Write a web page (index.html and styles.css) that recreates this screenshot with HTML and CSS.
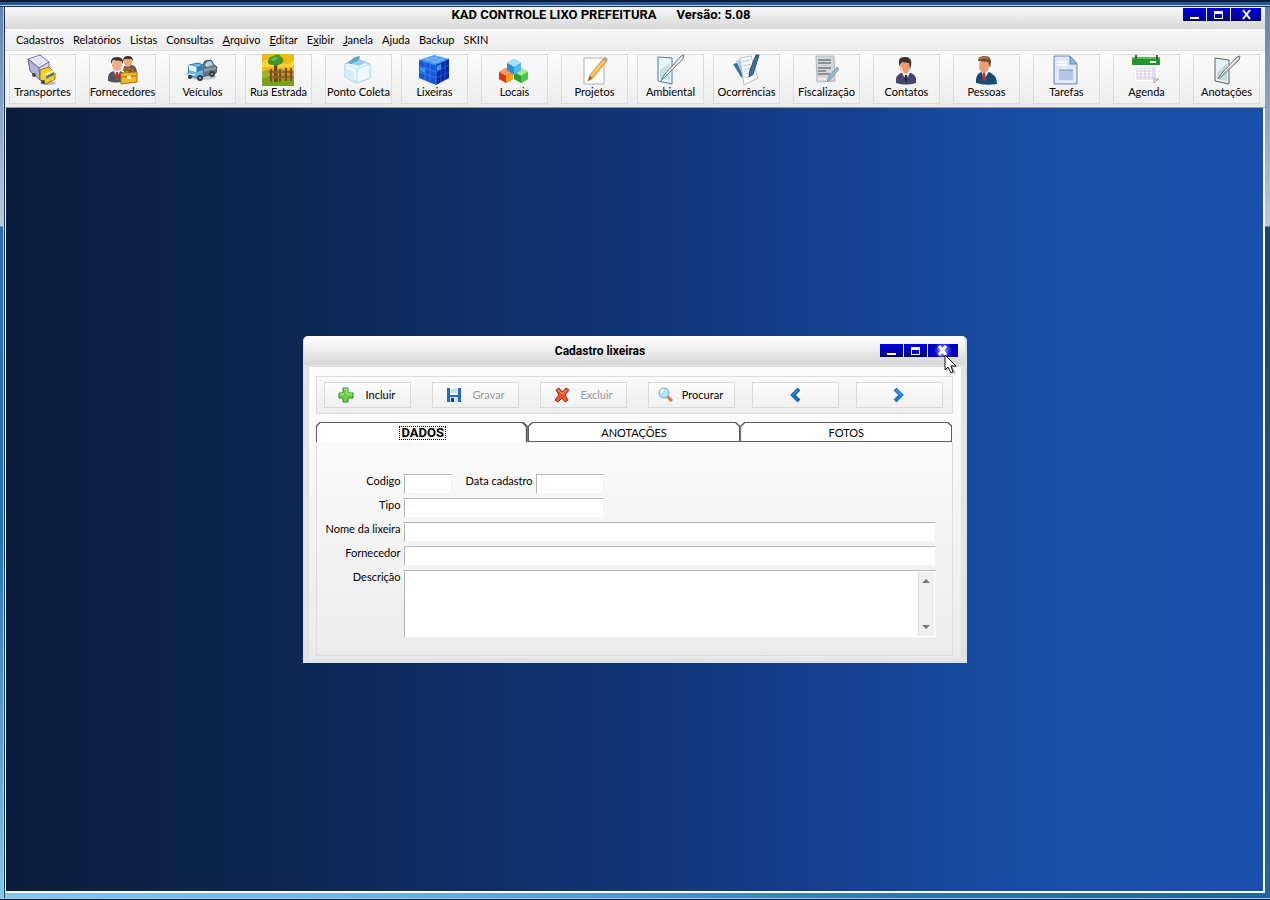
FILE: index.html
```html
<!DOCTYPE html>
<html lang="pt-BR">
    <head>
        <meta charset="utf-8">
        <title>KAD Controle Lixo Prefeitura</title>
        <link rel="stylesheet" href="styles.css">
    </head>
    <body>
        <div class="window">
            <header class="titlebar">
                <h1><span>KAD CONTROLE LIXO PREFEITURA</span><span>Versão: 5.08</span></h1>
                <div class="controls">
                    <button type="button" aria-label="Minimizar"><svg width="13" height="11"><path d="M2 8h9v2H2z" fill="#fff"/></svg></button>
                    <button type="button" aria-label="Maximizar"><svg width="13" height="11"><path d="M2 2h9v8H2zM3 5v4h7V5z" fill="#fff" fill-rule="evenodd"/></svg></button>
                    <button type="button" class="close" aria-label="Fechar"><svg width="13" height="11"><path d="M3 1l7 9M10 1l-7 9" stroke="#fff" stroke-width="2"/></svg></button>
                </div>
            </header>

            <nav class="menu">
                <a href="#">Cadastros</a>
                <a href="#">Relatórios</a>
                <a href="#">Listas</a>
                <a href="#">Consultas</a>
                <a href="#"><u>A</u>rquivo</a>
                <a href="#"><u>E</u>ditar</a>
                <a href="#">E<u>x</u>ibir</a>
                <a href="#"><u>J</u>anela</a>
                <a href="#">Ajuda</a>
                <a href="#">Backup</a>
                <a href="#">SKIN</a>
            </nav>

            <div class="toolbar">
                <button type="button" class="tool">
                    <svg width="32" height="32" viewBox="0 0 32 32">
                        <ellipse cx="22" cy="29" rx="8" ry="2" fill="#bbb"/>
                        <path d="M2 5l12-4 9 7-10 6z" fill="#e6e6f8" stroke="#77779c"/>
                        <path d="M2 5l11 9 1 12L4 17z" fill="#b4b4d4" stroke="#66668a"/>
                        <path d="M13 14l10-6v9l-9 9z" fill="#d2d2ea" stroke="#77779c"/>
                        <path d="M14 16l9-3 6 6v6l-9 5-6-4z" fill="#f6cf2c" stroke="#94700b"/>
                        <path d="M19 20l8-4 2 3-8 5z" fill="#fff3a0"/>
                        <path d="M20 22l8-4v3l-8 4z" fill="#557085"/>
                        <circle cx="17" cy="28" r="2" fill="#444"/><circle cx="8" cy="21" r="2" fill="#444"/>
                    </svg>
                    <span>Transportes</span>
                </button>
                <button type="button" class="tool">
                    <svg width="32" height="32" viewBox="0 0 32 32">
                        <path d="M17 17q0-6 5-6h4q5 1 5 8z" fill="#5a5c66"/>
                        <ellipse cx="22" cy="8" rx="4" ry="5" fill="#eda878"/>
                        <path d="M17 7q0-5 5-5 5 0 5 5l-2-2h-6z" fill="#42302b"/>
                        <path d="M2 27q-1-9 6-10h6q5 1 4 10-8 3-16 0z" fill="#52545e"/>
                        <path d="M8 17l3 9 3-9z" fill="#fff"/><path d="M10 18h2l1 4-2 4-2-4z" fill="#bc3322"/>
                        <ellipse cx="11" cy="11" rx="5" ry="6" fill="#f2ae84"/>
                        <path d="M5 10q-1-7 6-7 7 0 6 7l-2-3-8-1z" fill="#38302d"/>
                        <path d="M19 18v-3h8v3" fill="none" stroke="#a86b0b" stroke-width="2"/>
                        <path d="M15 19l16-1v10l-16 2z" fill="#edb82b" stroke="#a8700b"/>
                        <path d="M16 23l14-1" stroke="#9e6900"/><path d="M21 22h4v3h-4z" fill="#fff2a6"/>
                    </svg>
                    <span>Fornecedores</span>
                </button>
                <button type="button" class="tool">
                    <svg width="32" height="32" viewBox="0 0 32 32">
                        <ellipse cx="16" cy="23" rx="14" ry="3" fill="#c6c9cc"/>
                        <path d="M15 14l4-7 6-1 3 5 3 2-1 6-14 4z" fill="#68747f" stroke="#46515c"/>
                        <path d="M19 11l2-3 4-1 2 4-6 2z" fill="#b9d5e3"/>
                        <path d="M18 15l12-2v2l-12 3z" fill="#8c9ba6"/>
                        <path d="M3 11l9-2 5 2 1 11-7 2-9-3z" fill="#68b9de" stroke="#2e7397"/>
                        <path d="M3 11l7 2v5l-7-2z" fill="#e4f8ff"/><path d="M11 13l5-2 1 5-6 2z" fill="#347fa9"/>
                        <path d="M2 20l7 1" stroke="#fff"/>
                        <circle cx="14" cy="24" r="3" fill="#333a40"/><circle cx="26" cy="20" r="3" fill="#333a40"/><circle cx="4" cy="23" r="2" fill="#333a40"/>
                        <circle cx="14" cy="24" r="1" fill="#bbb"/><circle cx="26" cy="20" r="1" fill="#bbb"/>
                    </svg>
                    <span>Veículos</span>
                </button>
                <button type="button" class="tool tight">
                    <svg width="32" height="32" viewBox="0 0 32 32">
                        <path d="M0 0h32v32H0z" fill="#f4bb12"/>
                        <path d="M0 8q8-6 16 0t16-2v7H0z" fill="#ffd438"/>
                        <path d="M0 18q12-6 32-1v15H0z" fill="#97b527"/><path d="M0 25l22-5 10 3v9H0z" fill="#74a31e"/>
                        <path d="M12 8h3l1 20h-4z" fill="#75451c"/>
                        <path d="M6 7q1-4 5-5 6-4 8 1 5 3 0 7-5 3-8 1-6 0-5-4z" fill="#439326"/><path d="M8 6l4-3 4 1-4 3z" fill="#76b842"/>
                        <path d="M7 18h24M7 23h24" stroke="#a75a29" stroke-width="2"/>
                        <path d="M9 15v13M18 15v13M24 14v13M29 14v13" stroke="#8e471e" stroke-width="2"/>
                    </svg>
                    <span>Rua Estrada</span>
                </button>
                <button type="button" class="tool">
                    <svg width="32" height="32" viewBox="0 0 32 32">
                        <path d="M3 10l11-4 14 4v14l-13 5-12-6z" fill="#e4f6ff" stroke="#91c7e7"/>
                        <path d="M3 10l12 5v14L3 23z" fill="#d2eefc"/><path d="M15 15l13-5v14l-13 5z" fill="#eefaff" stroke="#b6dff4"/>
                        <path d="M6 9l6-3 5-4v3l8 3-8 4z" fill="#9bcfe9"/><path d="M5 9l8-6 5-1-1 4-8 4z" fill="#5fa6cc"/>
                        <path d="M5 13l8 4v9" fill="none" stroke="#f4fcff" stroke-width="2"/>
                    </svg>
                    <span>Ponto Coleta</span>
                </button>
                <button type="button" class="tool tight">
                    <svg width="32" height="32" viewBox="0 0 32 32">
                        <path d="M1 6l15-5 15 4-13 6z" fill="#4c9bf4"/>
                        <path d="M1 6l17 5v20L1 24z" fill="#1557d6"/><path d="M18 11l13-6v19l-13 7z" fill="#0826a3"/>
                        <path d="M6 4l17 5M11 3l16 4M6 8l15-6M12 10l15-6" fill="none" stroke="#7fbcfa"/>
                        <path d="M1 6l17 5v20M1 12l17 6M1 18l17 6M7 8v18M12 9v20" fill="none" stroke="#347ee6"/>
                        <path d="M18 11l13-6M18 18l13-7M18 24l13-6M23 9v19M27 7v19" fill="none" stroke="#2357cc"/>
                        <path d="M2 13l5 2v4l-5-2zM19 12l4-2v5l-4 2z" fill="#3a9af4"/>
                    </svg>
                    <span>Lixeiras</span>
                </button>
                <button type="button" class="tool">
                    <svg width="32" height="32" viewBox="0 0 32 32">
                        <path d="M1 18l7-4 7 4v7l-7 4-7-4z" fill="#d83517"/><path d="M1 18l7-4 7 4-7 4z" fill="#ff9b62"/><path d="M8 22l7-4v7l-7 4z" fill="#f5a30e"/>
                        <path d="M16 18l7-4 7 4v7l-7 4-7-4z" fill="#279c2c"/><path d="M16 18l7-4 7 4-7 4z" fill="#a0ec8f"/><path d="M23 22l7-4v7l-7 4z" fill="#51c648"/>
                        <path d="M9 9l7-4 7 4v7l-7 5-7-5z" fill="#268fd9"/><path d="M9 9l7-4 7 4-7 4z" fill="#a4e3ff"/><path d="M16 13l7-4v7l-7 5z" fill="#51b7ee"/>
                    </svg>
                    <span>Locais</span>
                </button>
                <button type="button" class="tool">
                    <svg width="32" height="32" viewBox="0 0 32 32">
                        <path d="M6 4h20v26H6z" fill="#fff" stroke="#a5b0ba"/>
                        <path d="M10 27l2-6L26 4l3 3-15 18z" fill="#f6b746" stroke="#d79a45"/>
                        <path d="M13 22L27 6" stroke="#ffe49b"/><path d="M25 5l2-2 3 2-2 3z" fill="#c593a0"/><path d="M10 27l2-5 2 2z" fill="#74583b"/>
                    </svg>
                    <span>Projetos</span>
                </button>
                <button type="button" class="tool tight">
                    <svg width="32" height="32" viewBox="0 0 32 32">
                        <path d="M4 3l14 1v26L4 27z" fill="#e8f6fc" stroke="#53788d"/>
                        <path d="M6 16l10-7v17L6 25z" fill="#c1e0ec"/>
                        <path d="M7 27l3-6L27 2l3-1-1 4-18 18z" fill="#d5d7d8" stroke="#7a8083"/>
                        <path d="M11 21L28 4" stroke="#fff"/>
                    </svg>
                    <span>Ambiental</span>
                </button>
                <button type="button" class="tool tight">
                    <svg width="32" height="32" viewBox="0 0 32 32">
                        <path d="M3 10l8-2 6 18-6-3z" fill="#386da1"/><path d="M6 7l8-4 7 21-6 2z" fill="#b7ccdd"/>
                        <path d="M10 4l11-2 7 22-14 7z" fill="#f7fafc" stroke="#b5c1cd"/>
                        <path d="M12 8l8-2M13 12l8-2M14 16l7-2M15 20l8-3M16 24l9-4" stroke="#b9c9d7"/>
                        <path d="M19 23l1-7 6-15h3l-6 19z" fill="#3d719a" stroke="#284a68"/>
                    </svg>
                    <span>Ocorrências</span>
                </button>
                <button type="button" class="tool">
                    <svg width="32" height="32" viewBox="0 0 32 32">
                        <path d="M6 2h18l1 25-18 1z" fill="#d3d7d9" stroke="#b3b9bd"/>
                        <path d="M8 6h13M8 9h13M8 14h13M8 17h8M8 20h12" stroke="#8a9297" stroke-width="2"/>
                        <path d="M17 28l2-6 8-9 2 2-9 11z" fill="#9fb6c8" stroke="#86a0b2"/>
                        <path d="M8 25h8" stroke="#fff"/>
                    </svg>
                    <span>Fiscalização</span>
                </button>
                <button type="button" class="tool">
                    <svg width="32" height="32" viewBox="0 0 32 32">
                        <path d="M6 29q-1-8 5-10h10q6 2 5 10-10 3-20 0z" fill="#45456d"/>
                        <path d="M12 18l4 10 4-10z" fill="#fff"/><path d="M15 21h2l1 4-2 4-2-4z" fill="#252a42"/>
                        <ellipse cx="15" cy="13" rx="5" ry="7" fill="#e99c72"/><path d="M11 13q1 6 4 7" fill="none" stroke="#ffd1ae" stroke-width="2"/>
                        <path d="M9 12V6q1-3 6-3 8 0 6 9l-1 3-1-6-7-1z" fill="#39322f"/>
                    </svg>
                    <span>Contatos</span>
                </button>
                <button type="button" class="tool">
                    <svg width="32" height="32" viewBox="0 0 32 32">
                        <path d="M6 29q-1-8 5-11h8q8 3 8 12-12 2-21-1z" fill="#174b70"/>
                        <path d="M11 16l3 10 5-9z" fill="#fff"/><path d="M13 18h2l1 7-2 3-2-5z" fill="#c92f30"/>
                        <ellipse cx="14" cy="12" rx="5" ry="7" fill="#e9a173"/>
                        <path d="M8 7q0-5 7-5 6 0 6 6l-1 6-2-6-9-1z" fill="#73482e"/><path d="M10 5q4-3 8 0" fill="none" stroke="#b27a4c" stroke-width="2"/>
                    </svg>
                    <span>Pessoas</span>
                </button>
                <button type="button" class="tool">
                    <svg width="32" height="32" viewBox="0 0 32 32">
                        <path d="M4 2h16l7 8v20H4z" fill="#dce7fb" stroke="#6c86b6"/>
                        <path d="M20 2v8h7z" fill="#9bb3df" stroke="#6c86b6"/>
                        <path d="M7 8h10M7 11h10" stroke="#fff" stroke-width="2"/><path d="M8 15h16v12H8z" fill="#b3c6ea" stroke="#fff"/>
                        <path d="M9 16h14" stroke="#7790c5"/>
                    </svg>
                    <span>Tarefas</span>
                </button>
                <button type="button" class="tool">
                    <svg width="32" height="32" viewBox="0 0 32 32">
                        <path d="M4 10h25v18H4z" fill="#fff" stroke="#eee"/><path d="M2 3h28v8H2z" fill="#23952d"/>
                        <path d="M2 3h28v2H2z" fill="#5cbd54"/><path d="M6 1v5M27 1v5" stroke="#555" stroke-width="2"/><path d="M20 8h6" stroke="#fff" stroke-width="2"/>
                        <path d="M7 14h18v11H7zM7 17h18M7 20h18M7 23h18M11 14v11M15 14v11M19 14v11M23 14v11" fill="none" stroke="#cfcbe2"/>
                        <path d="M24 29v-4h5z" fill="#ddd" stroke="#aaa"/>
                    </svg>
                    <span>Agenda</span>
                </button>
                <button type="button" class="tool">
                    <svg width="32" height="32" viewBox="0 0 32 32">
                        <path d="M5 4l14 2v24L5 27z" fill="#e5f2f5" stroke="#53636b"/>
                        <path d="M7 19l10-10v18L7 25z" fill="#c0d7df"/>
                        <path d="M8 25l3-5L27 3l3-1-1 4-17 16z" fill="#d6d6d6" stroke="#777"/><path d="M12 20L28 4" stroke="#fff"/>
                    </svg>
                    <span>Anotações</span>
                </button>
            </div>

            <main class="desktop">
                <section class="dialog">
                    <header class="titlebar">
                        <h2>Cadastro lixeiras</h2>
                        <div class="controls">
                            <button type="button" aria-label="Minimizar"><svg width="13" height="11"><path d="M2 8h9v2H2z" fill="#fff"/></svg></button>
                            <button type="button" aria-label="Maximizar"><svg width="13" height="11"><path d="M2 2h9v8H2zM3 5v4h7V5z" fill="#fff" fill-rule="evenodd"/></svg></button>
                            <button type="button" class="close hot" aria-label="Fechar"><svg width="13" height="11"><path d="M3 1l7 9M10 1l-7 9" stroke="#fff" stroke-width="3"/></svg></button>
                        </div>
                    </header>

                    <div class="dialog-body">
                        <div class="actions">
                            <button type="button" class="action">
                                <svg width="16" height="16"><path d="M5 1h5v5h5v5h-5v4H5v-4H1V6h4z" fill="#6bd044" stroke="#278b22"/><path d="M6 2h3v5h5M2 7h4" fill="none" stroke="#b5f38e"/></svg>
                                <span>Incluir</span>
                            </button>
                            <button type="button" class="action" disabled>
                                <svg width="16" height="16"><path d="M1 1h14v14H1z" fill="#2769bd"/><path d="M4 1h8v7H4z" fill="#edf5fc"/><path d="M5 3h6M5 5h6" stroke="#a9bdd0"/><path d="M4 10h8v5H4z" fill="#d2dee9"/><path d="M5 11h3v4H5z" fill="#173e7c"/></svg>
                                <span>Gravar</span>
                            </button>
                            <button type="button" class="action" disabled>
                                <svg width="16" height="16"><path d="M2 3l3-2 3 4 4-4 3 2-4 5 3 5-3 2-3-4-4 4-3-2 4-5z" fill="#f05232" stroke="#b52817"/><path d="M4 3l4 4 4-4" fill="none" stroke="#ffa28a"/></svg>
                                <span>Excluir</span>
                            </button>
                            <button type="button" class="action find">
                                <svg width="16" height="16"><path d="M9 9l5 5" stroke="#d87943" stroke-width="3"/><circle cx="6" cy="6" r="5" fill="#b5e3f5" stroke="#70a6c2"/><path d="M3 6q0-3 3-3" fill="none" stroke="#fff" stroke-width="2"/></svg>
                                <span>Procurar</span>
                            </button>
                            <button type="button" class="action arrow" aria-label="Anterior"><svg width="16" height="16"><path d="M12 2L6 8l6 6" fill="none" stroke="#1769bd" stroke-width="4"/><path d="M11 3L6 8" stroke="#45a0e5"/></svg></button>
                            <button type="button" class="action arrow" aria-label="Próximo"><svg width="16" height="16"><path d="M4 2l6 6-6 6" fill="none" stroke="#1e78cc" stroke-width="4"/><path d="M5 3l5 5" stroke="#57b4f0"/></svg></button>
                        </div>

                        <div class="tabs" role="tablist">
                            <button type="button" class="tab active" role="tab" aria-selected="true"><span>DADOS</span></button>
                            <button type="button" class="tab" role="tab" aria-selected="false"><span>ANOTAÇÕES</span></button>
                            <button type="button" class="tab" role="tab" aria-selected="false"><span>FOTOS</span></button>
                        </div>

                        <form class="panel">
                            <label for="codigo">Codigo</label>
                            <div class="row">
                                <input id="codigo" class="small" type="text">
                                <label for="data">Data cadastro</label>
                                <input id="data" class="date" type="text">
                            </div>
                            <label for="tipo">Tipo</label>
                            <input id="tipo" class="medium" type="text">
                            <label for="nome">Nome da lixeira</label>
                            <input id="nome" type="text">
                            <label for="fornecedor">Fornecedor</label>
                            <input id="fornecedor" type="text">
                            <label for="descricao">Descrição</label>
                            <div class="memo">
                                <textarea id="descricao"></textarea>
                                <div class="scroll">
                                    <button type="button" aria-label="Rolar para cima"><svg width="9" height="5"><path d="M0 5l4-4 4 4z" fill="#777"/></svg></button>
                                    <button type="button" aria-label="Rolar para baixo"><svg width="9" height="5"><path d="M0 0h8L4 4z" fill="#777"/></svg></button>
                                </div>
                            </div>
                        </form>
                    </div>
                    <svg class="cursor" width="15" height="22"><path d="M2 2v16l4-4 3 6 3-1-3-6h5z" fill="#888" opacity=".5"/><path d="M1 1v15l3-3 3 6 2-1-2-6h5z" fill="#fff" stroke="#111"/></svg>
                </section>
            </main>
        </div>
    </body>
</html>
```
FILE: styles.css
```css
* {
    box-sizing: border-box;
}

body {
    margin: 0;
    height: 100vh;
    padding: 7px 5px 7px 5px;
    overflow: hidden;
    font-family: Lato, Roboto, "Liberation Sans", sans-serif;
    font-size: 11px;
    line-height: 14px;
    color: #000;
    background:
        linear-gradient(#0b1c38 0 2px, #29578f 2px 5px, #b5d3e8 5px 6px, #12315c 6px 7px, transparent 7px),
        linear-gradient(to top, #06182e 0 1px, #9bcbe9 1px 2px, transparent 2px),
        linear-gradient(90deg, transparent 0 3px, #a9cce4 3px 4px, #17345c 4px 5px, transparent 5px),
        linear-gradient(#6280ad, #b8c8dd 226px, #286da8 227px, #2474b2 60%, #84c4e6) left / 5px 100% no-repeat,
        linear-gradient(#6280ad, #b8c8dd 226px, #164474 227px, #1f65a6) right / 5px 100% no-repeat,
        linear-gradient(90deg, #85c5e8, #6cb3dd 30%, #2d77b5 70%, #1d62a3);
}

button {
    font: inherit;
    color: inherit;
    padding: 0;
    border: 0;
    background: none;
}

h1, h2 {
    margin: 0;
    font-family: Roboto, "Liberation Sans", sans-serif;
    font-size: 12px;
    line-height: 14px;
    font-weight: bold;
}

.window {
    height: 100%;
    display: flex;
    flex-direction: column;
    background: #fff;
}

.titlebar {
    display: grid;
    grid-template-columns: 1fr auto 1fr;
    align-items: start;
    background: linear-gradient(#f9f9f9, #d6d6d6);
}

.titlebar h1,
.titlebar h2 {
    grid-column: 2;
    margin-right: 68px;
}

.window > .titlebar {
    height: 22px;
    padding: 1px 4px 0;
}

.titlebar h1 {
    display: flex;
    gap: 20px;
    font-size: 13px;
}

.controls {
    display: flex;
    gap: 1px;
    justify-self: end;
}

.controls button {
    display: flex;
    align-items: center;
    justify-content: center;
    width: 23px;
    height: 13px;
    background: linear-gradient(#0000d8, #0000b0 60%, #000070);
}

.controls .close {
    width: 30px;
}

.controls .hot {
    background: radial-gradient(circle, #aab0ff, #0000d0 9px, #0000a0);
}

.menu {
    display: flex;
    gap: 9px;
    height: 21px;
    padding: 4px 11px;
    background: linear-gradient(#f8f8f8, #ececec);
}

.menu a {
    color: #000;
    text-decoration: none;
}

.toolbar {
    display: flex;
    height: 58px;
    padding: 3px 4px;
    border-top: 1px solid #ddd;
    border-bottom: 1px solid #999;
    background: linear-gradient(#fdfdfd, #ebebeb);
}

.tool {
    display: flex;
    flex-direction: column;
    align-items: center;
    flex: 0 0 67px;
    min-width: 0;
    height: 50px;
    border: 1px solid #dcdcdc;
    background: linear-gradient(#fafafa, #f0f0f0);
    white-space: nowrap;
}

.tool + .tool {
    margin-left: 13px;
}

.tool + .tight {
    margin-left: 9px;
}

.tool svg {
    flex: none;
    margin: -1px 2px 0 0;
}

.tool span {
    line-height: 12px;
}

.desktop {
    flex: 1;
    display: flex;
    align-items: center;
    justify-content: center;
    margin: 0 2px 2px 1px;
    background: linear-gradient(90deg, #0a1d3d, #0c2550 20%, #113578 50%, #1a50aa 85%, #1a50ac);
}

.dialog {
    position: relative;
    width: 664px;
    border: 1px solid #d3e4ec;
    border-width: 0 2px 2px 1px;
    border-radius: 5px 5px 0 0;
    background: #e4e4e4;
}

.dialog .titlebar {
    height: 29px;
    padding: 8px 7px 0;
    border-radius: 5px 5px 0 0;
    background: linear-gradient(#fff, #f2f2f2 40%, #d5d5d5);
}

.dialog-body {
    margin: 1px 3px 3px 4px;
    padding: 9px 8px 2px 7px;
    border: 1px solid #ddd;
    border-bottom: 0;
    background: linear-gradient(#fdfdfd, #ebebeb);
}

.actions {
    display: flex;
    align-items: center;
    gap: 21px;
    height: 38px;
    padding: 0 7px;
    border: 1px solid #dcdcdc;
    background: linear-gradient(#fafafa, #ededed);
}

.action {
    display: flex;
    align-items: center;
    width: 87px;
    height: 26px;
    padding: 0 7px 0 13px;
    border: 1px solid #dadada;
    background: linear-gradient(#fcfcfc, #f1f1f1);
}

.action svg {
    flex: none;
}

.action span {
    flex: 1;
    padding-left: 5px;
    text-align: center;
}

.action.find {
    padding-left: 9px;
}

.action:disabled {
    color: #999;
}

.action.arrow {
    justify-content: center;
    margin-left: -4px;
    padding: 0;
}

.tabs {
    display: flex;
    margin-top: 8px;
}

.tab {
    flex: 1;
    height: 20px;
    padding: 1px;
    font-size: 11px;
    background: #5c5c5c;
    clip-path: polygon(0 4px, 4px 0, calc(100% - 4px) 0, 100% 4px, 100% 100%, 0 100%);
}

.tab span {
    display: block;
    height: 18px;
    line-height: 20px;
    background: #fff;
    clip-path: polygon(0 4px, 4px 0, calc(100% - 4px) 0, 100% 4px, 100% 100%, 0 100%);
}

.tab.active {
    display: flex;
    justify-content: center;
    padding: 0 0 0 2px;
    position: relative;
    font-family: Roboto, "Liberation Sans", sans-serif;
    font-size: 13px;
    font-weight: bold;
}

.tab.active::before {
    content: "";
    position: absolute;
    inset: 1px 2px 0 1px;
    background: #fff;
    clip-path: polygon(0 4px, 4px 0, calc(100% - 4px) 0, 100% 4px, 100% 100%, 0 100%);
}

.tab.active span {
    position: relative;
    height: 14px;
    margin-top: 4px;
    line-height: 14px;
    outline: 1px dotted #000;
    outline-offset: -1px;
    padding: 0 2px;
    clip-path: none;
}

.panel {
    display: grid;
    grid-template-columns: 77px 1fr;
    gap: 4px 3px;
    padding: 32px 16px 17px 7px;
    border: 1px solid #ddd;
    border-top: 0;
    background: linear-gradient(#fbfbfb, #ebebeb);
}

.panel label {
    text-align: right;
    white-space: nowrap;
}

.row {
    display: flex;
    gap: 3px;
}

.row label {
    width: 78px;
}

.panel input,
.memo {
    width: 100%;
    height: 20px;
    margin: 0;
    padding: 2px;
    border: 1px solid #f3f3f3;
    border-top-color: #b5b5b5;
    border-left-color: #b5b5b5;
    background: #fff;
    font: inherit;
}

.panel .small {
    width: 48px;
}

.panel .date {
    width: 68px;
}

.panel .medium {
    width: 200px;
}

.memo {
    display: flex;
    height: 68px;
    padding: 1px 0;
}

.memo textarea {
    flex: 1;
    padding: 2px;
    border: 0;
    resize: none;
    overflow: hidden;
    font: inherit;
}

.scroll {
    display: flex;
    flex-direction: column;
    justify-content: space-between;
    width: 17px;
    border-left: 1px solid #ddd;
    border-right: 1px solid #fff;
    background: #efefef;
}

.scroll button {
    display: flex;
    align-items: center;
    justify-content: center;
    height: 17px;
}

.cursor {
    position: absolute;
    top: 18px;
    right: 6px;
}
```
